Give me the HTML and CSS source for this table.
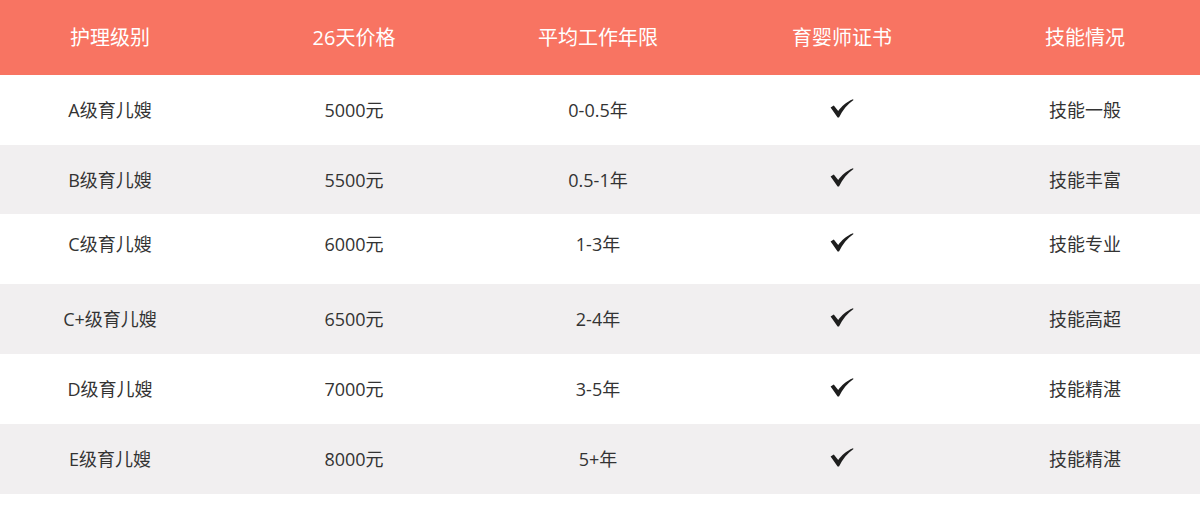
FILE: index.html
```html
<!DOCTYPE html>
<html lang="zh-CN">
<head>
  <meta charset="UTF-8">
  <title>育儿嫂级别</title>
  <link rel="stylesheet" href="styles.css">
</head>
<body>
  <div class="price-table">
    <div class="row head">
      <div class="cell">护理级别</div>
      <div class="cell">26天价格</div>
      <div class="cell">平均工作年限</div>
      <div class="cell">育婴师证书</div>
      <div class="cell">技能情况</div>
    </div>
    <div class="row">
      <div class="cell">A级育儿嫂</div>
      <div class="cell">5000元</div>
      <div class="cell">0-0.5年</div>
      <div class="cell"><svg class="check" viewBox="0 0 24 19"><path d="M0.6 8.4 L3.8 6.4 L8.2 12 C11.5 7.4 16 3 23 0.2 L23.5 1 C17.4 5.2 12.6 11 9 18.6 L7.6 18.6 Z"/></svg></div>
      <div class="cell">技能一般</div>
    </div>
    <div class="row alt short">
      <div class="cell">B级育儿嫂</div>
      <div class="cell">5500元</div>
      <div class="cell">0.5-1年</div>
      <div class="cell"><svg class="check" viewBox="0 0 24 19"><path d="M0.6 8.4 L3.8 6.4 L8.2 12 C11.5 7.4 16 3 23 0.2 L23.5 1 C17.4 5.2 12.6 11 9 18.6 L7.6 18.6 Z"/></svg></div>
      <div class="cell">技能丰富</div>
    </div>
    <div class="row raised">
      <div class="cell">C级育儿嫂</div>
      <div class="cell">6000元</div>
      <div class="cell">1-3年</div>
      <div class="cell"><svg class="check" viewBox="0 0 24 19"><path d="M0.6 8.4 L3.8 6.4 L8.2 12 C11.5 7.4 16 3 23 0.2 L23.5 1 C17.4 5.2 12.6 11 9 18.6 L7.6 18.6 Z"/></svg></div>
      <div class="cell">技能专业</div>
    </div>
    <div class="row alt">
      <div class="cell">C+级育儿嫂</div>
      <div class="cell">6500元</div>
      <div class="cell">2-4年</div>
      <div class="cell"><svg class="check" viewBox="0 0 24 19"><path d="M0.6 8.4 L3.8 6.4 L8.2 12 C11.5 7.4 16 3 23 0.2 L23.5 1 C17.4 5.2 12.6 11 9 18.6 L7.6 18.6 Z"/></svg></div>
      <div class="cell">技能高超</div>
    </div>
    <div class="row">
      <div class="cell">D级育儿嫂</div>
      <div class="cell">7000元</div>
      <div class="cell">3-5年</div>
      <div class="cell"><svg class="check" viewBox="0 0 24 19"><path d="M0.6 8.4 L3.8 6.4 L8.2 12 C11.5 7.4 16 3 23 0.2 L23.5 1 C17.4 5.2 12.6 11 9 18.6 L7.6 18.6 Z"/></svg></div>
      <div class="cell">技能精湛</div>
    </div>
    <div class="row alt">
      <div class="cell">E级育儿嫂</div>
      <div class="cell">8000元</div>
      <div class="cell">5+年</div>
      <div class="cell"><svg class="check" viewBox="0 0 24 19"><path d="M0.6 8.4 L3.8 6.4 L8.2 12 C11.5 7.4 16 3 23 0.2 L23.5 1 C17.4 5.2 12.6 11 9 18.6 L7.6 18.6 Z"/></svg></div>
      <div class="cell">技能精湛</div>
    </div>
  </div>
</body>
</html>
```

FILE: styles.css
```css
body {
  margin: 0;
  background: #fff;
  font-family: "Open Sans", "Noto Sans CJK SC", sans-serif;
  color: #333;
}

.price-table {
  width: 1200px;
}

.row {
  display: grid;
  grid-template-columns: 232px 244px 244px 244px 236px;
  align-items: center;
  height: 70px;
  font-size: 18px;
  background: #fff;
}

.row.alt {
  background: #f1eff0;
}

.row.short {
  height: 69px;
}

.row.head {
  height: 75px;
  background: #f87462;
  color: #fff;
  font-size: 20px;
}

.row.raised {
  padding-bottom: 10px;
  height: 60px;
}

.cell {
  text-align: center;
  line-height: 24px;
}

.cell:first-child {
  padding-right: 12px;
}

.cell:last-child {
  padding-left: 6px;
}

.check {
  display: block;
  width: 24px;
  height: 19px;
  margin: -4px auto 0;
  fill: #1e1e1e;
}
```
